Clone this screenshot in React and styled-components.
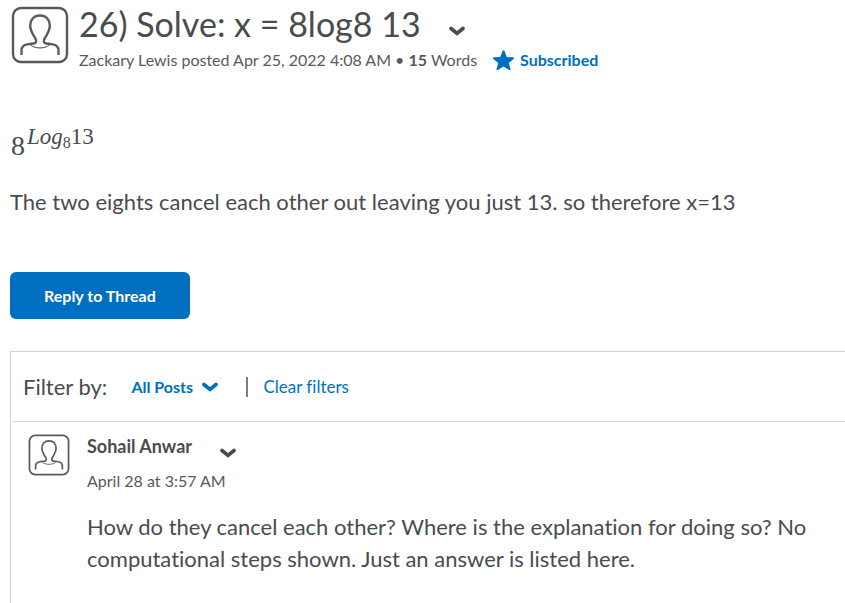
import React from 'react'
import styled, { createGlobalStyle } from 'styled-components'

const GlobalStyle = createGlobalStyle`
  * {
    box-sizing: border-box;
  }

  body {
    margin: 0;
    background-color: white;
    color: #494c4e;
    font-family: Lato, 'Open Sans', sans-serif;
    font-size: 22px;
    font-variant-ligatures: none;
    line-height: 32px;
  }

  h1, h2, p {
    margin: 0;
  }
`

const Page = styled.main`
  padding: 6px 0 0 10px;
`

const ThreadHeader = styled.header`
  display: flex;
  gap: 10px;
  padding-left: 1px;
`

const HeaderText = styled.div`
  flex: 1;
  min-width: 0;
`

const TitleRow = styled.div`
  display: flex;
  align-items: center;
  gap: 28px;
`

const Title = styled.h1`
  font-size: 34px;
  line-height: 36px;
  font-weight: normal;
`

const Meta = styled.div`
  display: flex;
  flex-wrap: wrap;
  align-items: center;
  gap: 16px;
  padding-top: 6px;
  color: #565a5c;
  font-size: 16px;
  line-height: 24px;
`

const IconButton = styled.button`
  display: flex;
  padding: 14px 0 0;
  border: 0;
  background: none;
  color: #494c4e;
  cursor: pointer;
`

const SubscribeButton = styled.button`
  display: flex;
  align-items: center;
  gap: 6px;
  padding: 0;
  border: 0;
  background: none;
  color: #006fbf;
  font: inherit;
  font-weight: bold;
  cursor: pointer;
`

const Formula = styled.p`
  padding: 54px 0 0 1px;
  font-family: 'Liberation Serif', serif;
  font-size: 28px;
  line-height: 40px;

  sup {
    margin-left: 2px;
    font-size: 23px;
    line-height: 0;
    vertical-align: 11px;
  }

  sub {
    font-size: 16px;
    line-height: 0;
    vertical-align: -4px;
  }
`

const Body = styled.p`
  padding-top: 20px;
`

const ReplyButton = styled.button`
  display: block;
  margin-top: 54px;
  padding: 12px 34px;
  border: 0;
  border-radius: 6px;
  background-color: #006fbf;
  color: white;
  font: inherit;
  font-size: 16px;
  font-weight: bold;
  line-height: 23px;
  cursor: pointer;
`

const Posts = styled.section`
  min-height: 252px;
  margin-top: 32px;
  border: 1px solid #cdd5dc;
  border-width: 1px 0 0 1px;
`

const FilterBar = styled.div`
  display: flex;
  align-items: center;
  gap: 24px;
  height: 70px;
  margin-left: 2px;
  padding-left: 10px;
  border-bottom: 1px solid #cdd5dc;
`

const FilterSelect = styled.span`
  display: flex;
  align-items: center;
  gap: 9px;
  color: #006fbf;

  select {
    appearance: none;
    padding: 0;
    border: 0;
    background: none;
    color: inherit;
    font: inherit;
    font-size: 16px;
    line-height: 24px;
    font-weight: bold;
    cursor: pointer;
  }
`

const ClearFilters = styled.div`
  display: flex;
  align-items: center;
  gap: 15px;
  margin-left: 4px;
  font-size: 17px;

  &::before {
    content: '';
    height: 20px;
    border-left: 2px solid #7c7f81;
  }

  a {
    color: #006fbf;
    text-decoration: none;
  }
`

const Post = styled.article`
  display: flex;
  gap: 17px;
  padding: 12px 24px 24px 17px;
`

const PostContent = styled.div`
  flex: 1;
  min-width: 0;
`

const AuthorRow = styled.div`
  display: flex;
  align-items: center;
  gap: 28px;
`

const Author = styled.h2`
  font-size: 18px;
  line-height: 24px;
`

const PostDate = styled.p`
  padding: 11px 0 18px;
  color: #565a5c;
  font-size: 16px;
  line-height: 24px;
`

const AvatarIcon = styled.svg`
  flex: none;
`

const Avatar = ({ size, label }) => (
  <AvatarIcon width={size} height={size} viewBox="0 0 58 58" fill="none" stroke="#565a5c" role="img" aria-label={label}>
    <rect x="2" y="2" width="54" height="54" rx="8" strokeWidth="2.4" />
    <path
      d="M10.500 49v-4.500c0-3.500 1.500-5.500 5.500-6.200l6.500-.8c2-.3 3-1.200 2.500-3.500-.4-2-1.600-2.800-3-5.500-1.500-2.800-2.800-5.700-2.800-8.500 0-6.500 4-10.500 9.800-10.500s9.800 4 9.800 10.500c0 2.800-1.300 5.700-2.800 8.500-1.400 2.700-2.600 3.500-3 5.500-.5 2.300.5 3.200 2.500 3.500l6.500.8c4 .7 5.500 2.700 5.500 6.200V49"
      strokeWidth="2.300"
    />
    <path d="M19.500 38.500c3.500 4.500 15.500 4.500 19 0" strokeWidth="1.200" />
  </AvatarIcon>
)

const Chevron = () => (
  <svg width="16" height="10" viewBox="0 0 16 10" fill="none" stroke="currentColor" strokeWidth="3.600" strokeLinecap="round" aria-hidden="true">
    <path d="M2 2.500l6 5 6-5" />
  </svg>
)

const Star = () => (
  <svg width="21" height="20" viewBox="0 0 21 20" fill="currentColor" aria-hidden="true">
    <path d="M9.600.7a1 1 0 0 1 1.800 0l2.400 6.300 6.200.3c.9.100 1.300 1 .6 1.600l-4.800 4 1.700 6c.2.900-.6 1.400-1.400 1l-5.600-3.500-5.600 3.500c-.8.400-1.600-.1-1.400-1l1.700-6-4.800-4C-.3 8.300.1 7.400 1 7.300L7.200 7z" />
  </svg>
)

class App extends React.Component {

  state = {
    subscribed: true,
    filter: 'all',
  };

  toggleSubscribed(){
    this.setState({
      subscribed: !this.state.subscribed,
    });
  }

  render() {
    const { subscribed, filter } = this.state;

    return (
      <>
        <GlobalStyle />
        <Page>
          <ThreadHeader>
            <Avatar size={58} label="Zackary Lewis" />
            <HeaderText>
              <TitleRow>
                <Title>26) Solve: x = 8log8 13</Title>
                <IconButton type="button" aria-label="Thread actions"><Chevron /></IconButton>
              </TitleRow>
              <Meta>
                <span>Zackary Lewis posted Apr 25, 2022 4:08 AM • <b>15</b> Words</span>
                <SubscribeButton type="button" onClick={() => this.toggleSubscribed()}>
                  <Star />
                  {subscribed ? 'Subscribed' : 'Subscribe'}
                </SubscribeButton>
              </Meta>
            </HeaderText>
          </ThreadHeader>

          <Formula>8<sup><i>Log</i><sub>8</sub>13</sup></Formula>
          <Body>The two eights cancel each other out leaving you just 13. so therefore x=13</Body>
          <ReplyButton type="button">Reply to Thread</ReplyButton>

          <Posts>
            <FilterBar>
              <label htmlFor="post-filter">Filter by:</label>
              <FilterSelect>
                <select id="post-filter" value={filter} onChange={e => this.setState({ filter: e.target.value })}>
                  <option value="all">All Posts</option>
                </select>
                <Chevron />
              </FilterSelect>
              <ClearFilters>
                <a href="#clear" onClick={() => this.setState({ filter: 'all' })}>Clear filters</a>
              </ClearFilters>
            </FilterBar>
            <Post>
              <Avatar size={42} label="Sohail Anwar" />
              <PostContent>
                <AuthorRow>
                  <Author>Sohail Anwar</Author>
                  <IconButton type="button" aria-label="Post actions"><Chevron /></IconButton>
                </AuthorRow>
                <PostDate>April 28 at 3:57 AM</PostDate>
                <p>How do they cancel each other? Where is the explanation for doing so? No computational steps shown. Just an answer is listed here.</p>
              </PostContent>
            </Post>
          </Posts>
        </Page>
      </>
    )
  }
}

export default App
